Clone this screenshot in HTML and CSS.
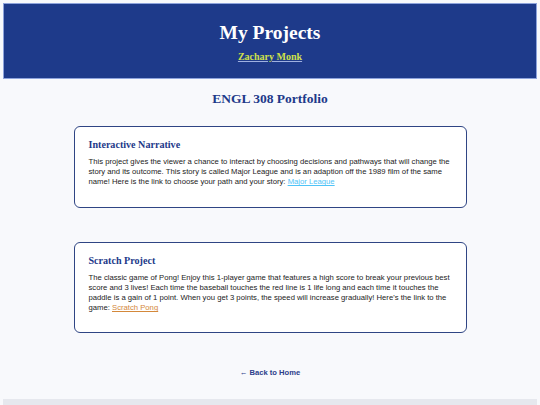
FILE: index.html
```html
<!DOCTYPE html>
<html lang="en">
<head>
<meta charset="utf-8">
<title>My Projects</title>
<link rel="stylesheet" href="styles.css">
</head>
<body>
<header class="site-header">
  <h1 class="site-title">My Projects</h1>
  <a class="author-link" href="#">Zachary Monk</a>
</header>
<main class="content">
  <h2 class="page-title">ENGL 308 Portfolio</h2>
  <section class="card">
    <h3 class="card-title">Interactive Narrative</h3>
    <p class="card-text">This project gives the viewer a chance to interact by choosing decisions and pathways that will change the story and its outcome. This story is called Major League and is an adaption off the 1989 film of the same name! Here is the link to choose your path and your story: <a class="link-blue" href="#">Major League</a></p>
  </section>
  <section class="card card-second">
    <h3 class="card-title">Scratch Project</h3>
    <p class="card-text">The classic game of Pong! Enjoy this 1-player game that features a high score to break your previous best score and 3 lives! Each time the baseball touches the red line is 1 life long and each time it touches the paddle is a gain of 1 point. When you get 3 points, the speed will increase gradually! Here's the link to the game: <a class="link-orange" href="#">Scratch Pong</a></p>
  </section>
  <div class="back">
    <a class="back-link" href="#">&larr; Back to Home</a>
  </div>
</main>
<footer class="site-footer"></footer>
</body>
</html>
```
FILE: styles.css
```css
html, body {
  margin: 0;
  padding: 0;
}
body {
  margin: 3px;
  background: #f8f9fc;
  font-family: "Liberation Serif", "Times New Roman", serif;
}
.site-header {
  background: #1e3a8a;
  border: 1px solid #8ea3dc;
  text-align: center;
  padding: 16px 0 14px;
}
.site-title {
  margin: 0;
  color: #ffffff;
  font-size: 19.5px;
  line-height: 26px;
  font-weight: bold;
}
.author-link {
  display: inline-block;
  margin-top: 4px;
  color: #cfe04a;
  font-size: 10px;
  line-height: 14px;
  font-weight: bold;
  text-decoration: underline;
  text-decoration-color: #9fb0e0;
}
.content {
  width: 393px;
  margin: 0 auto;
  padding-top: 10px;
}
.page-title {
  margin: 0 0 17px;
  text-align: center;
  color: #1e3a8a;
  font-size: 13.5px;
  line-height: 20px;
  font-weight: bold;
}
.card {
  background: #ffffff;
  border: 1.5px solid #2f4584;
  border-radius: 6px;
  padding: 10px 14px 19px;
}
.card-second {
  margin-top: 34px;
}
.card-title {
  margin: 0 0 5px;
  color: #1e3a8a;
  font-size: 10.1px;
  line-height: 15px;
  font-weight: bold;
}
.card-text {
  margin: 0;
  font-family: "Liberation Sans", Arial, sans-serif;
  font-size: 7.7px;
  line-height: 10.2px;
  color: #222222;
}
.link-blue {
  color: #4fc3f7;
  text-decoration: underline;
}
.link-orange {
  color: #d4883a;
  text-decoration: underline;
}
.back {
  text-align: center;
  padding: 34px 0 20px;
  font-family: "Liberation Sans", Arial, sans-serif;
  font-size: 7.6px;
  line-height: 12px;
}
.back-link {
  font-weight: bold;
  color: #2c3e8a;
  text-decoration: none;
}
.site-footer {
  background: #e6e8ee;
  height: 20px;
}
```
